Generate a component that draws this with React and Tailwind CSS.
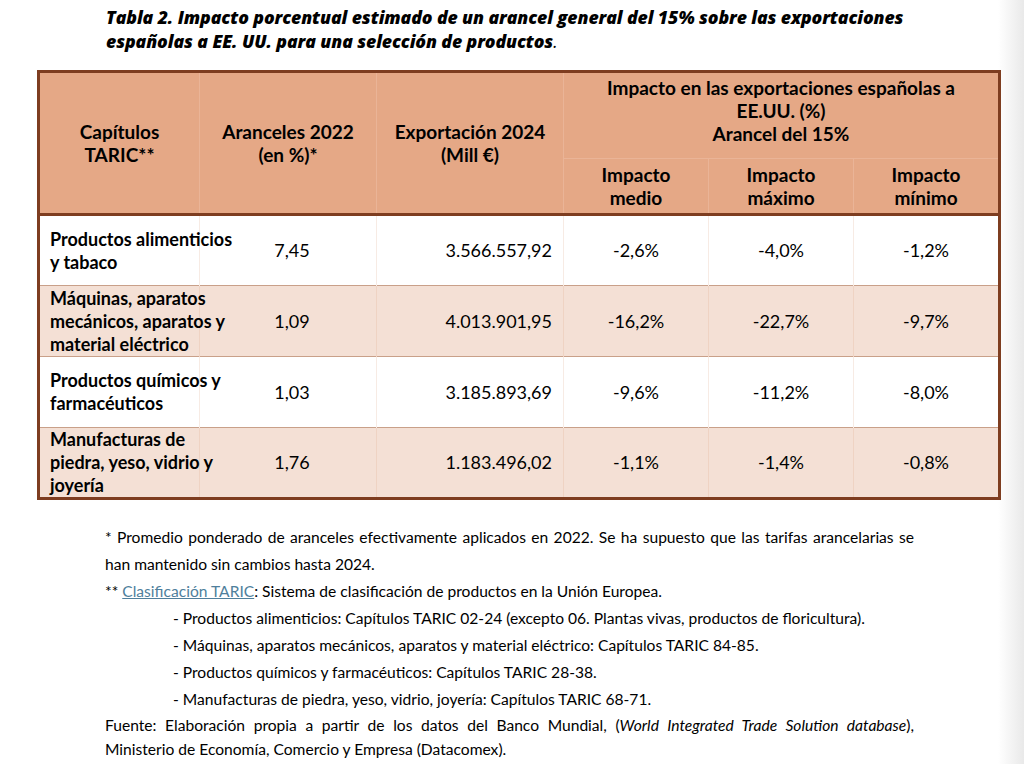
import React from "react";

const rows = [
  { name: ["Productos alimenticios", "y tabaco"], ar: "7,45", exp: "3.566.557,92", med: "-2,6%", max: "-4,0%", min: "-1,2%", alt: false },
  { name: ["Máquinas, aparatos", "mecánicos, aparatos y", "material eléctrico"], ar: "1,09", exp: "4.013.901,95", med: "-16,2%", max: "-22,7%", min: "-9,7%", alt: true },
  { name: ["Productos químicos y", "farmacéuticos"], ar: "1,03", exp: "3.185.893,69", med: "-9,6%", max: "-11,2%", min: "-8,0%", alt: false },
  { name: ["Manufacturas de", "piedra, yeso, vidrio y", "joyería"], ar: "1,76", exp: "1.183.496,02", med: "-1,1%", max: "-1,4%", min: "-0,8%", alt: true },
];

const font = { fontFamily: "Lato, 'Open Sans', sans-serif" };

export default function App() {
  return (
    <div className="relative w-[1024px] h-[764px] bg-white overflow-hidden text-black" style={font}>
      <div className="absolute right-0 top-0 h-full w-[26px] bg-gradient-to-r from-white to-[#e9e9e9]" />
      <div className="relative flex flex-col">
        <div className="pl-[106px] pt-[5px] text-[17.7px] leading-[24px] font-extrabold italic tracking-[-0.1px]" style={{ fontFamily: "'Open Sans', sans-serif" }}>
          <div className="whitespace-nowrap">Tabla 2. Impacto porcentual estimado de un arancel general del 15% sobre las exportaciones</div>
          <div className="whitespace-nowrap">españolas a EE. UU. para una selección de productos<span className="font-normal">.</span></div>
        </div>

        <div className="pl-[37px] pt-[17px]">
          <table className="border-collapse border-[3px] border-[#7e3d20] table-fixed w-[961px] text-[18px] leading-[23px]">
            <colgroup>
              <col className="w-[161px]" />
              <col className="w-[177px]" />
              <col className="w-[187px]" />
              <col className="w-[145px]" />
              <col className="w-[145px]" />
              <col className="w-[146px]" />
            </colgroup>
            <thead className="bg-[#e5a886] font-bold text-[19px]">
              <tr className="h-[87px]">
                <th rowSpan={2} className="border-r border-[#eab497] border-b-[3px] border-b-[#7e3d20] font-bold text-center">
                  Capítulos<br />TARIC**
                </th>
                <th rowSpan={2} className="border-r border-[#eab497] border-b-[3px] border-b-[#7e3d20] font-bold text-center">
                  Aranceles 2022<br />(en %)*
                </th>
                <th rowSpan={2} className="border-r border-[#eab497] border-b-[3px] border-b-[#7e3d20] font-bold text-center">
                  Exportación 2024<br />(Mill €)
                </th>
                <th colSpan={3} className="border-b border-[#eab497] font-bold text-center align-top pt-[3px] whitespace-nowrap">
                  Impacto en las exportaciones españolas a<br />EE.UU. (%)<br />Arancel del 15%
                </th>
              </tr>
              <tr className="h-[56px]">
                <th className="border-r border-[#eab497] border-b-[3px] border-b-[#7e3d20] font-bold text-center">Impacto<br />medio</th>
                <th className="border-r border-[#eab497] border-b-[3px] border-b-[#7e3d20] font-bold text-center">Impacto<br />máximo</th>
                <th className="border-b-[3px] border-b-[#7e3d20] font-bold text-center">Impacto<br />mínimo</th>
              </tr>
            </thead>
            <tbody>
              {rows.map((r, i) => (
                <tr key={i} className={`h-[71px] ${r.alt ? "bg-[#f4e0d5]" : "bg-white"} ${i < rows.length - 1 ? "border-b border-[#c9a089]" : ""}`}>
                  <td className={`pl-[10px] font-bold whitespace-nowrap ${r.alt ? "border-r border-[#efd3c3]" : "border-r border-[#f7ebe4]"}`}>
                    {r.name.map((l, j) => (
                      <div key={j}>{l}</div>
                    ))}
                  </td>
                  <td className={`text-center pl-[8px] ${r.alt ? "border-r border-[#efd3c3]" : "border-r border-[#f7ebe4]"}`}>{r.ar}</td>
                  <td className={`text-right pr-[11px] ${r.alt ? "border-r border-[#efd3c3]" : "border-r border-[#f7ebe4]"}`}>{r.exp}</td>
                  <td className={`text-center ${r.alt ? "border-r border-[#efd3c3]" : "border-r border-[#f7ebe4]"}`}>{r.med}</td>
                  <td className={`text-center ${r.alt ? "border-r border-[#efd3c3]" : "border-r border-[#f7ebe4]"}`}>{r.max}</td>
                  <td className="text-center">{r.min}</td>
                </tr>
              ))}
            </tbody>
          </table>
        </div>

        <div className="pl-[105px] pt-[24px] w-[914px] text-[15.6px] leading-[27px]">
          <p className="text-justify [text-align-last:justify] whitespace-nowrap">
            * Promedio ponderado de aranceles efectivamente aplicados en 2022. Se ha supuesto que las tarifas arancelarias se
          </p>
          <p>han mantenido sin cambios hasta 2024.</p>
          <p>
            ** <span className="text-[#4f7f9c] underline decoration-[#4f7f9c]">Clasificación TARIC</span>: Sistema de clasificación de productos en la Unión Europea.
          </p>
          <div className="pl-[68px] whitespace-nowrap">
            <p>- Productos alimenticios: Capítulos TARIC 02-24 (excepto 06. Plantas vivas, productos de floricultura).</p>
            <p>- Máquinas, aparatos mecánicos, aparatos y material eléctrico: Capítulos TARIC 84-85.</p>
            <p>- Productos químicos y farmacéuticos: Capítulos TARIC 28-38.</p>
            <p>- Manufacturas de piedra, yeso, vidrio, joyería: Capítulos TARIC 68-71.</p>
          </div>
          <div className="leading-[24px]">
            <p className="text-justify [text-align-last:justify] whitespace-nowrap">
              Fuente: Elaboración propia a partir de los datos del Banco Mundial, (<i>World Integrated Trade Solution database</i>),
            </p>
            <p>Ministerio de Economía, Comercio y Empresa (Datacomex).</p>
          </div>
        </div>
      </div>
    </div>
  );
}
